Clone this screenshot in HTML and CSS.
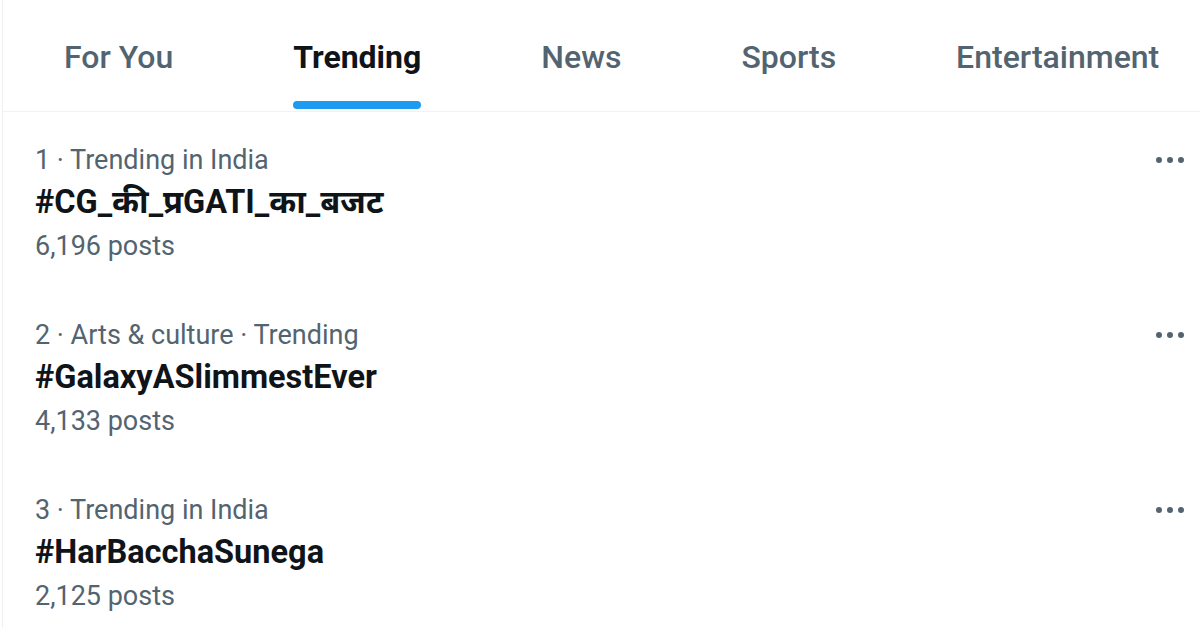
FILE: index.html
```html
<!DOCTYPE html>
<html lang="en">
<head>
<meta charset="utf-8">
<link rel="stylesheet" href="styles.css">
</head>
<body>
<div class="page">
  <nav class="tabs">
    <div class="tab">For You</div>
    <div class="tab active"><span class="label">Trending</span><span class="bar"></span></div>
    <div class="tab">News</div>
    <div class="tab">Sports</div>
    <div class="tab">Entertainment</div>
  </nav>
  <section class="trends">
    <div class="trend">
      <div class="info">
        <div class="meta">1 · Trending in India</div>
        <div class="title">#CG_की_प्रGATI_का_बजट</div>
        <div class="count">6,196 posts</div>
      </div>
      <div class="more"><span></span><span></span><span></span></div>
    </div>
    <div class="trend">
      <div class="info">
        <div class="meta">2 · Arts &amp; culture · Trending</div>
        <div class="title">#GalaxyASlimmestEver</div>
        <div class="count">4,133 posts</div>
      </div>
      <div class="more"><span></span><span></span><span></span></div>
    </div>
    <div class="trend">
      <div class="info">
        <div class="meta">3 · Trending in India</div>
        <div class="title">#HarBacchaSunega</div>
        <div class="count">2,125 posts</div>
      </div>
      <div class="more"><span></span><span></span><span></span></div>
    </div>
  </section>
</div>
</body>
</html>
```
FILE: styles.css
```css
html, body {
  margin: 0;
  padding: 0;
  background: #ffffff;
}
body {
  font-family: Roboto, "Noto Sans", "DejaVu Sans", sans-serif;
  width: 1200px;
  height: 628px;
  overflow: hidden;
}
.page {
  margin-left: 2px;
  border-left: 1px solid #eef0f2;
  height: 628px;
}
.tabs {
  display: flex;
  height: 112px;
  padding-left: 1px;
  border-bottom: 1px solid #eff3f4;
  box-sizing: border-box;
}
.tab {
  position: relative;
  padding: 3px 60px 0;
  display: flex;
  align-items: center;
  font-size: 32px;
  font-weight: 500;
  color: #536471;
  white-space: nowrap;
}
.tab.active {
  color: #0f1419;
  font-weight: 700;
}
.tab .bar {
  position: absolute;
  left: 60px;
  right: 60px;
  bottom: 2px;
  height: 8px;
  border-radius: 4px;
  background: #1d9bf0;
}
.trends {
  display: flex;
  flex-direction: column;
}
.trend {
  display: flex;
  justify-content: space-between;
  padding: 32px 16px 0 32px;
  height: 175px;
  box-sizing: border-box;
}
.info {
  display: flex;
  flex-direction: column;
}
.meta {
  font-size: 27px;
  color: #536471;
  line-height: 32px;
}
.title {
  font-size: 32.5px;
  font-weight: 700;
  color: #0f1419;
  line-height: 44px;
  margin-top: 4px;
}
.count {
  font-size: 27px;
  color: #536471;
  line-height: 44px;
}
.more {
  display: flex;
  gap: 5px;
  padding-top: 13px;
}
.more span {
  width: 6px;
  height: 6px;
  border-radius: 50%;
  background: #536471;
}
```
